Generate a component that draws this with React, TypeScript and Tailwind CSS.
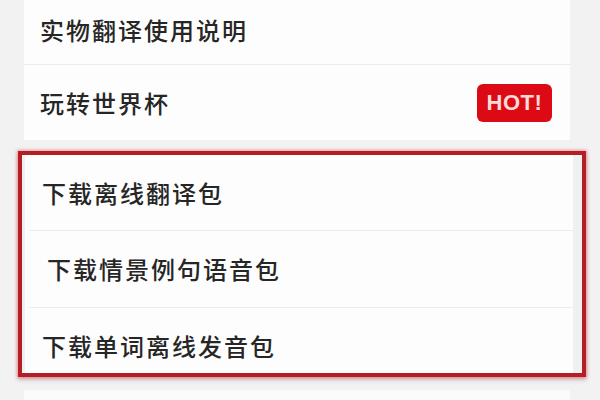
import React from 'react';

const font = { fontFamily: '"Noto Sans CJK SC", "Liberation Sans", sans-serif' };

interface RowProps {
    label: string;
    badge?: string;
    className?: string;
}

const Row: React.FC<RowProps> = ({ label, badge, className = '' }) => (
    <div className={`flex items-center justify-between pr-[18px] ${className}`}>
        <span className="text-[24px] leading-none tracking-[2px] font-medium text-[#262626]">{label}</span>
        {badge && (
            <span className="h-[38px] w-[75px] rounded-[6px] bg-[#dc0a14] flex items-center justify-center text-[22px] font-bold text-[#ffdada] tracking-[0.5px] [font-family:'Liberation_Sans',sans-serif]">
                {badge}
            </span>
        )}
    </div>
);

export default function App() {
    return (
        <div className="w-[600px] h-[400px] overflow-hidden bg-[#f2f2f3] flex flex-col" style={font}>
            {/* Top card */}
            <div className="ml-[24px] w-[546px] bg-[#fdfdfd] flex flex-col">
                <Row label="实物翻译使用说明" className="h-[64px] pl-[16px] pb-[4px]" />
                <div className="h-px bg-[#ebebeb]" />
                <Row label="玩转世界杯" badge="HOT!" className="h-[75px] pl-[16px]" />
            </div>

            {/* Highlighted downloads */}
            <div className="mt-[11px] ml-[18px] w-[568px] h-[226px] border-4 border-[#b41f27] bg-[#f0f0f1] pr-[9px] pl-[3px] shadow-[0_0_3px_1px_rgba(235,90,90,0.55),0_3px_4px_rgba(120,60,60,0.25)]">
                <div className="h-full bg-[#fdfdfd] flex flex-col">
                    <Row label="下载离线翻译包" className="h-[75px] pl-[17px]" />
                    <div className="h-px ml-[4px] bg-[#ebebeb]" />
                    <Row label="下载情景例句语音包" className="h-[76px] pl-[22px]" />
                    <div className="h-px ml-[4px] bg-[#ebebeb]" />
                    <Row label="下载单词离线发音包" className="flex-1 pl-[17px] pt-[10px]" />
                </div>
            </div>

            <div className="mt-[13px] ml-[24px] w-[546px] flex-1 bg-[#fbfbfb]" />
        </div>
    );
}
